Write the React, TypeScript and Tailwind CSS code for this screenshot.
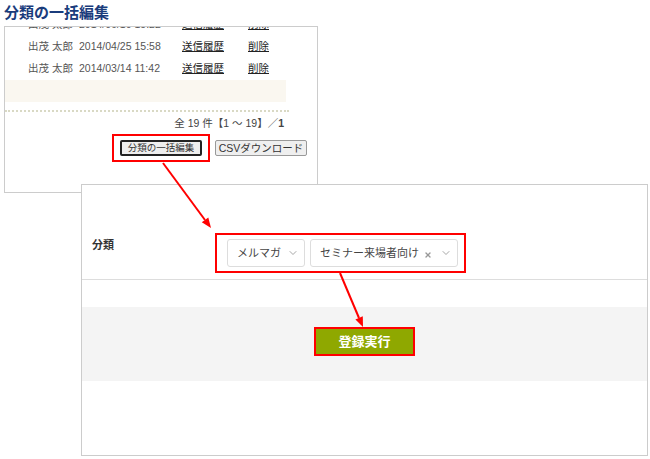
import React from "react";
import { ChevronDown, X } from "lucide-react";

const rows = [
  { name: "出茂 太郎", date: "2014/06/10 15:22" },
  { name: "出茂 太郎", date: "2014/04/25 15:58" },
  { name: "出茂 太郎", date: "2014/03/14 11:42" },
];

const HistoryRow = ({ name, date }: { name: string; date: string }) => (
  <div className="flex items-center h-[22px] pl-[23px] text-[10.5px] text-[#555]">
    <span className="w-[51px] whitespace-nowrap">{name}</span>
    <span className="w-[103px] whitespace-nowrap">{date}</span>
    <span className="w-[66px] text-[#222] underline">送信履歴</span>
    <span className="text-[#222] underline">削除</span>
  </div>
);

const SelectBox = ({ label, width, clearable }: { label: string; width: string; clearable?: boolean }) => (
  <div
    className={`${width} h-[28px] flex items-center border border-[#ddd] rounded-[3px] bg-white pl-[9px] pr-[5px] text-[11px] text-[#444]`}
  >
    <span className="whitespace-nowrap">{label}</span>
    <div className="flex-1" />
    {clearable && <X size={8} strokeWidth={4} className="text-[#999] mr-[8px] mt-[3px] shrink-0" />}
    <ChevronDown size={12} strokeWidth={1.5} className="text-[#888] shrink-0" />
  </div>
);

export default function App() {
  return (
    <div
      className="relative w-[650px] h-[459px] bg-white overflow-hidden"
      style={{ fontFamily: '"Liberation Sans", "Noto Sans CJK JP", sans-serif' }}
    >
      <h1 className="pl-[4px] pt-[3px] text-[15px] leading-[20px] font-bold text-[#1a3c7c]">分類の一括編集</h1>

      {/* background screenshot: list */}
      <div className="mt-[3px] ml-[4px] w-[314px] h-[167px] border border-[#ccc] overflow-hidden">
        <div className="-mt-[13px] w-[284px]">
          {rows.map((r, i) => (
            <HistoryRow key={i} {...r} />
          ))}
          <div className="h-[22px] bg-[#faf7f0] mr-[3px]" />
          <div className="mt-[8px] border-t-2 border-dotted border-[#d9d9c4]" />
          <div className="mt-[3px] pr-[5px] text-right text-[10.5px] leading-[16px] text-[#444] whitespace-nowrap">
            全 19 件【1 ～ 19】／<b>1</b>
          </div>
        </div>
        <div className="mt-[3px] flex items-center justify-end pr-[10px]">
          <div className="flex border-2 border-[#f00] px-[6px] py-[4px]">
            <button className="h-[16px] w-[82px] flex items-center justify-center border-2 border-[#222] rounded-[2px] bg-[#eee] text-[9.5px] leading-[12px] text-[#333] whitespace-nowrap">
              分類の一括編集
            </button>
          </div>
          <button className="ml-[5px] h-[16px] w-[92px] flex items-center justify-center border border-[#999] rounded-[2px] bg-[#efefef] text-[10.5px] leading-[12px] text-[#333] whitespace-nowrap">
            CSVダウンロード
          </button>
        </div>
      </div>

      {/* foreground screenshot: edit form */}
      <div className="relative -mt-[9px] ml-[81px] w-[567px] h-[272px] border border-[#ccc] bg-white">
        <div className="flex items-start pt-[48px] pb-[6px] border-b border-[#ddd]">
          <div className="w-[133px] pl-[10px] mt-[4px] text-[11px] leading-[16px] font-bold text-[#333]">分類</div>
          <div className="flex gap-[5px] border-2 border-[#f00] pl-[10px] pr-[6px] py-[4px]">
            <SelectBox label="メルマガ" width="w-[78px]" />
            <SelectBox label="セミナー来場者向け" width="w-[148px]" clearable />
          </div>
        </div>
        <div className="mt-[27px] h-[74px] bg-[#f4f4f4] flex justify-center pt-[20px]">
          <div className="h-[29px] w-[101px] border-2 border-[#f00] bg-[#8fa800] flex items-center justify-center">
            <span className="text-[13px] font-bold text-white">登録実行</span>
          </div>
        </div>
      </div>

      {/* annotation arrows */}
      <svg className="absolute inset-0 pointer-events-none" width="650" height="459">
        <line x1="163" y1="163" x2="205" y2="220" stroke="#f00" strokeWidth="2" />
        <polygon points="201.8,222.3 208.3,217.6 211,228" fill="#f00" />
        <line x1="340" y1="273" x2="359" y2="318" stroke="#f00" strokeWidth="2" />
        <polygon points="355.4,319.4 362.8,316.2 363,327" fill="#f00" />
      </svg>
    </div>
  );
}
